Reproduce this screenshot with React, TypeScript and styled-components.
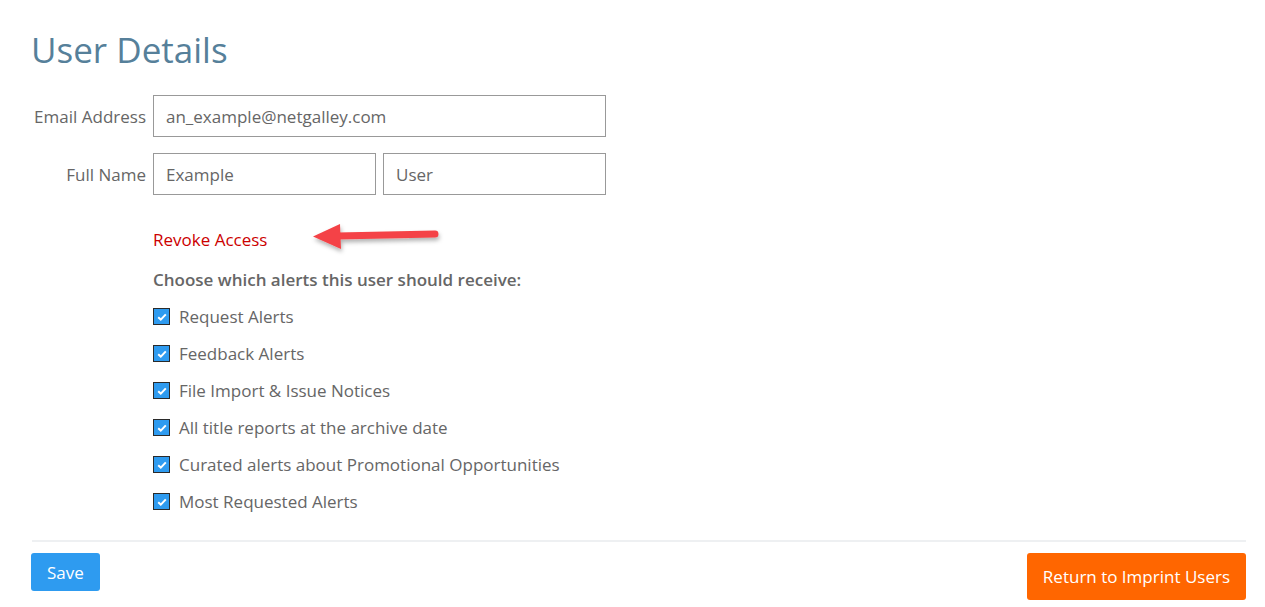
import styled, { createGlobalStyle } from 'styled-components';

const GlobalStyle = createGlobalStyle`
  html, body {
    margin: 0;
    padding: 0;
    background: #fff;
  }
  body {
    font-family: 'Open Sans', 'Lato', sans-serif;
    color: #666;
  }
`;

const Page = styled.div`
  padding: 28px 19px 0 32px;
`;

const Title = styled.h1`
  margin: 0 0 23px;
  font-size: 35px;
  font-weight: 400;
  color: #56809a;
  line-height: 44px;
  margin-left: -1px;
`;

const FieldRow = styled.div`
  display: flex;
  align-items: center;
  gap: 7px;
  margin-bottom: 16px;
`;

const Label = styled.label`
  width: 114px;
  text-align: right;
  font-size: 17px;
  color: #666;
  flex-shrink: 0;
  white-space: nowrap;
`;

const Inputs = styled.div`
  display: flex;
  gap: 7px;
  width: 453px;
`;

const TextInput = styled.input`
  flex: 1;
  min-width: 0;
  height: 42px;
  box-sizing: border-box;
  border: 1px solid #999;
  padding: 0 12px;
  font-family: inherit;
  font-size: 17px;
  color: #666;
  outline: none;
`;

const Details = styled.div`
  margin-left: 121px;
  padding-top: 15px;
`;

const RevokeRow = styled.div`
  position: relative;
  height: 26px;
  display: flex;
  align-items: center;
`;

const RevokeLink = styled.a`
  color: #cc0000;
  font-size: 17px;
  text-decoration: none;
  cursor: pointer;
`;

const Arrow = styled.svg`
  position: absolute;
  left: 158px;
  top: -6px;
  overflow: visible;
`;

const AlertsHeading = styled.div`
  margin-top: 16px;
  margin-bottom: 7px;
  font-size: 17px;
  font-weight: 600;
  color: #666;
`;

const CheckRow = styled.label`
  display: flex;
  align-items: center;
  gap: 9px;
  height: 37px;
  font-size: 17px;
  color: #666;
`;

const Box = styled.span`
  width: 17px;
  height: 17px;
  box-sizing: border-box;
  border: 1px solid #2a2a2a;
  background: #2e9bf0;
  display: flex;
  align-items: center;
  justify-content: center;
`;

const Divider = styled.hr`
  border: none;
  border-top: 2px solid #eef0f2;
  margin: 20px 0 11px;
`;

const Footer = styled.div`
  display: flex;
  justify-content: space-between;
  align-items: flex-start;
`;

const Button = styled.button<{ $tone: 'blue' | 'orange' }>`
  border: none;
  border-radius: 3px;
  color: #fff;
  font-family: inherit;
  font-size: 17px;
  cursor: pointer;
  background: ${(p) => (p.$tone === 'blue' ? '#2e9bf0' : '#ff6600')};
  height: ${(p) => (p.$tone === 'blue' ? '38px' : '47px')};
  padding: ${(p) => (p.$tone === 'blue' ? '0 16px' : '0 16px')};
  margin-left: ${(p) => (p.$tone === 'blue' ? '-1px' : '0')};
`;

const alerts = [
  'Request Alerts',
  'Feedback Alerts',
  'File Import & Issue Notices',
  'All title reports at the archive date',
  'Curated alerts about Promotional Opportunities',
  'Most Requested Alerts',
];

function Check() {
  return (
    <svg width="10" height="8" viewBox="0 0 10 8">
      <path d="M1.2 4.2 L3.8 6.6 L8.8 1.4" fill="none" stroke="#fff" strokeWidth="2" />
    </svg>
  );
}

export default function App() {
  return (
    <>
      <GlobalStyle />
      <Page>
        <Title>User Details</Title>
        <FieldRow>
          <Label>Email Address</Label>
          <Inputs>
            <TextInput defaultValue="an_example@netgalley.com" />
          </Inputs>
        </FieldRow>
        <FieldRow>
          <Label>Full Name</Label>
          <Inputs>
            <TextInput defaultValue="Example" />
            <TextInput defaultValue="User" />
          </Inputs>
        </FieldRow>
        <Details>
          <RevokeRow>
            <RevokeLink>Revoke Access</RevokeLink>
            <Arrow width="135" height="34" viewBox="0 0 135 34">
              <defs>
                <filter id="sh" x="-20%" y="-50%" width="140%" height="200%">
                  <feDropShadow dx="1" dy="3" stdDeviation="2" floodColor="#000" floodOpacity="0.3" />
                </filter>
              </defs>
              <g filter="url(#sh)">
                <path d="M26 16 L124 14" stroke="#f44346" strokeWidth="7" strokeLinecap="round" />
                <path d="M2 16.5 L29 4 L30 29 Z" fill="#f44346" />
              </g>
            </Arrow>
          </RevokeRow>
          <AlertsHeading>Choose which alerts this user should receive:</AlertsHeading>
          {alerts.map((a) => (
            <CheckRow key={a}>
              <Box>
                <Check />
              </Box>
              {a}
            </CheckRow>
          ))}
        </Details>
        <Divider />
        <Footer>
          <Button $tone="blue">Save</Button>
          <Button $tone="orange">Return to Imprint Users</Button>
        </Footer>
      </Page>
    </>
  );
}
